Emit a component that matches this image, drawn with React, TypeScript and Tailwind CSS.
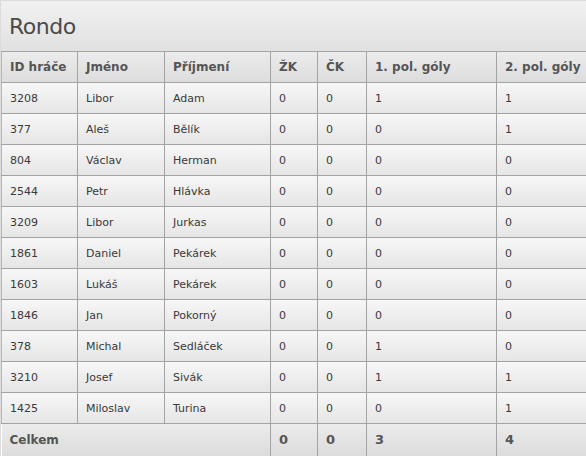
import React from "react";

const rows: [string, string, string, string, string, string, string][] = [
  ["3208", "Libor", "Adam", "0", "0", "1", "1"],
  ["377", "Aleš", "Bělík", "0", "0", "0", "1"],
  ["804", "Václav", "Herman", "0", "0", "0", "0"],
  ["2544", "Petr", "Hlávka", "0", "0", "0", "0"],
  ["3209", "Libor", "Jurkas", "0", "0", "0", "0"],
  ["1861", "Daniel", "Pekárek", "0", "0", "0", "0"],
  ["1603", "Lukáš", "Pekárek", "0", "0", "0", "0"],
  ["1846", "Jan", "Pokorný", "0", "0", "0", "0"],
  ["378", "Michal", "Sedláček", "0", "0", "1", "0"],
  ["3210", "Josef", "Sivák", "0", "0", "1", "1"],
  ["1425", "Miloslav", "Turina", "0", "0", "0", "1"],
];

const headers = ["ID hráče", "Jméno", "Příjmení", "ŽK", "ČK", "1. pol. góly", "2. pol. góly"];
const widths = ["w-[76px]", "w-[87px]", "w-[106px]", "w-[47px]", "w-[49px]", "w-[130px]", "w-[100px]"];

export default function App() {
  return (
    <div className="w-[586px] h-[456px] overflow-hidden bg-white text-[#444]" style={{ fontFamily: '"DejaVu Sans", Verdana, sans-serif' }}>
      <div className="w-[620px] border-t border-l border-[#dcdcdc]">
        <div className="h-[50px] bg-gradient-to-b from-[#f1f1f1] to-[#e1e1e1] pl-[8px] pt-[12px] text-[22px] leading-[28px] text-[#4a4a4a] tracking-[-0.5px]">
          Rondo
        </div>
        <table className="table-fixed border-collapse w-[595px]">
          <colgroup>
            {widths.map((w, i) => (
              <col key={i} className={w} />
            ))}
          </colgroup>
          <thead>
            <tr className="h-[31px] bg-gradient-to-b from-[#ececec] to-[#dcdcdc]">
              {headers.map((h, i) => (
                <th
                  key={i}
                  className="border border-[#a3a3a3] border-l-[#b8b8b8] text-left pl-[8px] text-[12px] font-bold text-[#555] whitespace-nowrap p-0"
                >
                  {h}
                </th>
              ))}
            </tr>
          </thead>
          <tbody>
            {rows.map((r, ri) => (
              <tr key={ri} className="h-[31px] bg-gradient-to-b from-[#f7f7f7] to-[#e5e5e5]">
                {r.map((c, ci) => (
                  <td
                    key={ci}
                    className="border border-[#a3a3a3] border-l-[#b8b8b8] pl-[8px] pt-[2px] text-[11px] text-[#3a3a3a] whitespace-nowrap p-0"
                  >
                    {c}
                  </td>
                ))}
              </tr>
            ))}
            <tr className="h-[32px] bg-gradient-to-b from-[#ececec] to-[#dcdcdc]">
              <td colSpan={3} className="border-t border-[#a3a3a3] pl-[8px] text-[12px] font-bold text-[#555] p-0">
                Celkem
              </td>
              {["0", "0", "3", "4"].map((c, i) => (
                <td key={i} className="border-t border-l border-[#a3a3a3] pl-[8px] text-[13px] font-bold text-[#555] p-0">
                  {c}
                </td>
              ))}
            </tr>
          </tbody>
        </table>
      </div>
    </div>
  );
}
